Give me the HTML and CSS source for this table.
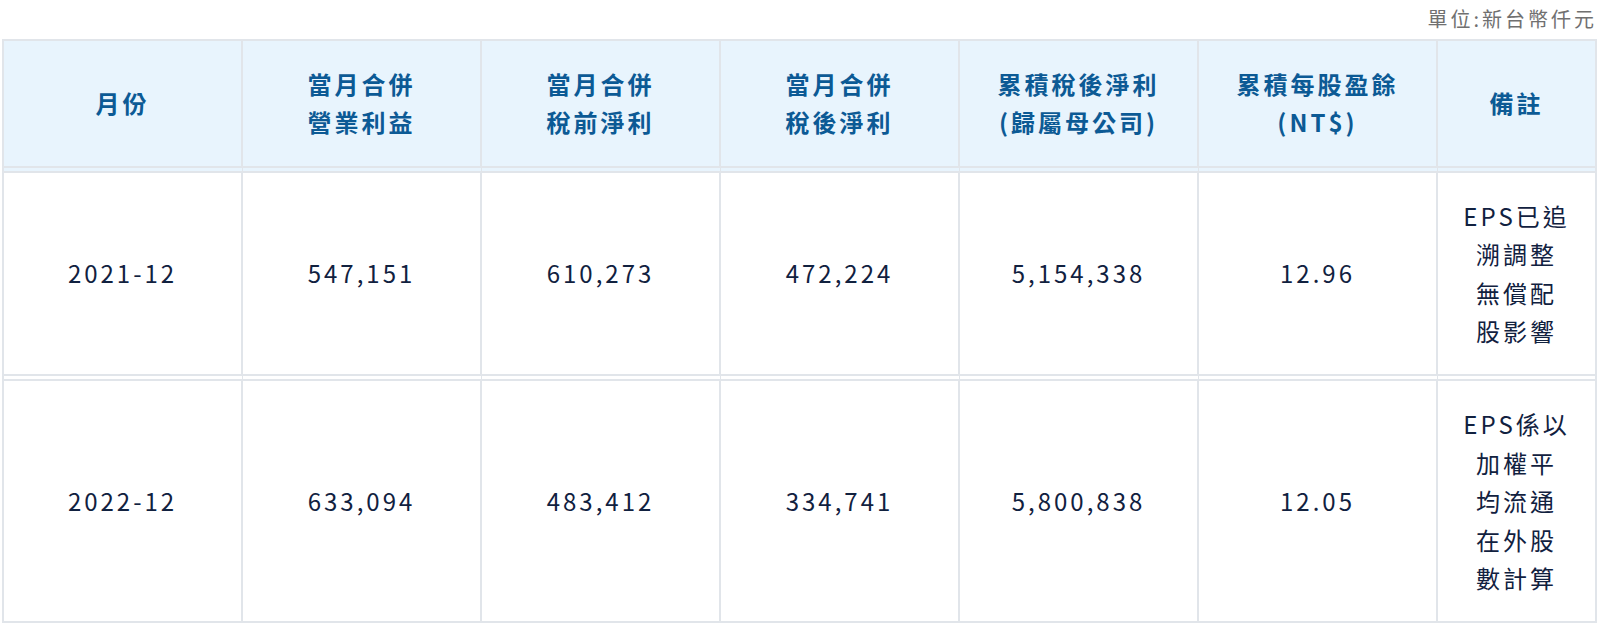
FILE: index.html
```html
<!DOCTYPE html>
<html lang="zh-Hant">
<head>
<meta charset="utf-8">
<title>營收報告</title>
<link rel="stylesheet" href="styles.css">
</head>
<body>
<div class="page">
  <div class="unit">單位:新台幣仟元</div>
  <table class="report">
    <colgroup>
      <col class="c"><col class="c"><col class="c"><col class="c"><col class="c"><col class="c"><col class="c-last">
    </colgroup>
    <thead>
      <tr>
        <th>月份</th>
        <th>當月合併<br>營業利益</th>
        <th>當月合併<br>稅前淨利</th>
        <th>當月合併<br>稅後淨利</th>
        <th>累積稅後淨利<br>(歸屬母公司)</th>
        <th>累積每股盈餘<br>(NT$)</th>
        <th>備註</th>
      </tr>
    </thead>
    <tbody>
      <tr>
        <td>2021-12</td>
        <td>547,151</td>
        <td>610,273</td>
        <td>472,224</td>
        <td>5,154,338</td>
        <td>12.96</td>
        <td>EPS已追<br>溯調整<br>無償配<br>股影響</td>
      </tr>
      <tr>
        <td>2022-12</td>
        <td>633,094</td>
        <td>483,412</td>
        <td>334,741</td>
        <td>5,800,838</td>
        <td>12.05</td>
        <td>EPS係以<br>加權平<br>均流通<br>在外股<br>數計算</td>
      </tr>
    </tbody>
  </table>
</div>
</body>
</html>
```

FILE: styles.css
```css
html, body {
  margin: 0;
  padding: 0;
  background: #ffffff;
}

body {
  font-family: "Noto Sans CJK TC", "Noto Sans", sans-serif;
  color: #13244a;
}

.page {
  padding: 0 3px 0 2px;
}

.unit {
  text-align: right;
  font-size: 20px;
  line-height: 30px;
  letter-spacing: 3px;
  color: #707070;
  padding-top: 4px;
  margin-bottom: 5px;
  margin-right: 0;
}

.report {
  width: 100%;
  table-layout: fixed;
  border-collapse: separate;
  border-spacing: 0;
  border: 2px solid #e1e5ea;
}

.report col.c {
  width: 239px;
}

.report th,
.report td {
  text-align: center;
  vertical-align: middle;
  font-size: 24px;
  line-height: 38.4px;
  letter-spacing: 3px;
  padding: 24px 0;
  border-right: 2px solid #e1e5ea;
}

.report th:last-child,
.report td:last-child {
  border-right: 0;
}

.report th {
  background: #e8f4fd;
  color: #0c5a95;
  font-weight: 700;
  border-bottom: 7px double #e1e5ea;
}

.report td {
  font-weight: 400;
  color: #11213f;
}

.report tbody tr:first-child td {
  border-bottom: 7px double #e1e5ea;
}
```
